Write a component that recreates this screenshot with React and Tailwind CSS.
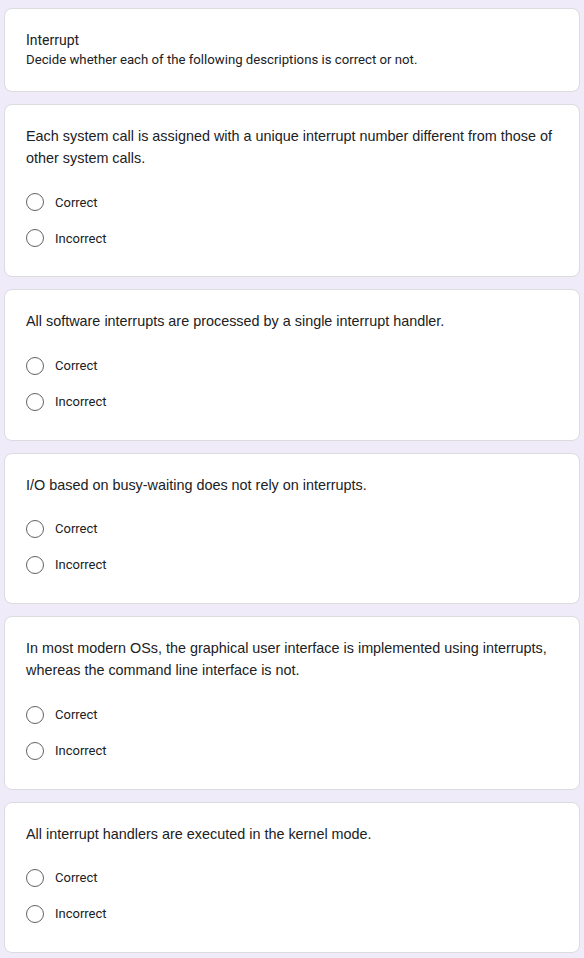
const questions = [
  'Each system call is assigned with a unique interrupt number different from those of other system calls.',
  'All software interrupts are processed by a single interrupt handler.',
  'I/O based on busy-waiting does not rely on interrupts.',
  'In most modern OSs, the graphical user interface is implemented using interrupts, whereas the command line interface is not.',
  'All interrupt handlers are executed in the kernel mode.',
]

const Option = ({ label }) => (
  <label className="flex items-center h-9 cursor-pointer">
    <span className="w-[18px] h-[18px] rounded-full border-[1.5px] border-[#5f6368] box-border" />
    <span className="ml-[11px] text-[13px] text-[#202124]" style={{ fontFamily: 'Roboto, sans-serif' }}>
      {label}
    </span>
  </label>
)

const App = () => {
  return (
    <div className="min-h-screen bg-[#f0ebf8] px-[4px] pt-[8px] pb-[4px]" style={{ fontFamily: 'Roboto, Arial, sans-serif' }}>
      <div className="flex flex-col gap-[12px]">
        {/* Header */}
        <div className="bg-white border border-[#dadce0] rounded-lg h-[84px] pl-[21px] pt-[21px]">
          <div className="text-[14px] leading-[20px] text-[#202124]">Interrupt</div>
          <div className="text-[13.2px] leading-[20px] text-[#202124]">
            Decide whether each of the following descriptions is correct or not.
          </div>
        </div>

        {questions.map((q) => (
          <div key={q} className="bg-white border border-[#dadce0] rounded-lg pl-[21px] pr-[20px] pt-[20px] pb-[20px]">
            <div
              className="text-[14.4px] leading-[22px] text-[#202124]"
              style={{ fontFamily: '"Liberation Sans", Arial, sans-serif' }}
            >
              {q}
            </div>
            <div className="mt-[15.4px] flex flex-col">
              <Option label="Correct" />
              <Option label="Incorrect" />
            </div>
          </div>
        ))}
      </div>
    </div>
  )
}

export default App
